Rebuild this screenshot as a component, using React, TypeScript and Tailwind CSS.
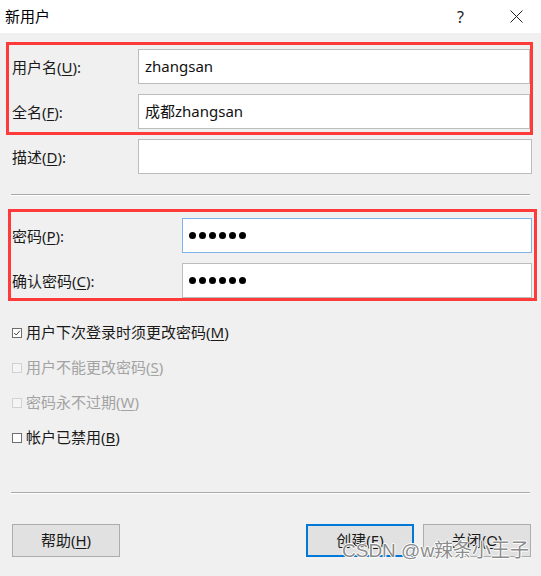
const font = "font-['Noto_Sans','Noto_Sans_CJK_SC',sans-serif]";

function Label({ text, k, tail = "):" }: { text: string; k: string; tail?: string }) {
  return (
    <span className="text-[15px] leading-none text-[#1a1a1a]">
      {text}(<span className="underline underline-offset-2">{k}</span>{tail}
    </span>
  );
}

function Field({ value, w, focus }: { value?: string; w: string; focus?: boolean }) {
  return (
    <div
      className={`${w} h-[35px] bg-white border flex items-center px-[6px] text-[15px] text-[#111] ${
        focus ? "border-[#7eb4ea]" : "border-[#bcbcbc]"
      }`}
    >
      {value}
    </div>
  );
}

function Dots() {
  return (
    <div className="flex gap-[3px]">
      {[0, 1, 2, 3, 4, 5].map((i) => (
        <span key={i} className="w-[7px] h-[7px] rounded-full bg-black" />
      ))}
    </div>
  );
}

function Check({ checked, disabled, text, k }: { checked?: boolean; disabled?: boolean; text: string; k: string }) {
  return (
    <div className="h-[35px] flex items-center pl-[12px] gap-[4px]">
      <svg width="10" height="10" viewBox="0 0 10 10">
        <rect
          x="0.5"
          y="0.5"
          width="9"
          height="9"
          fill={disabled ? "#f4f4f4" : "#fff"}
          stroke={disabled ? "#d2d2d2" : "#6e6e6e"}
        />
        {checked && <path d="M2.2 5 L4.2 7 L7.8 2.8" fill="none" stroke="#444" strokeWidth="1" />}
      </svg>
      <span className={`text-[15px] leading-none ${disabled ? "text-[#a3a3a3]" : "text-[#1a1a1a]"}`}>
        {text}(<span className="underline underline-offset-2">{k}</span>)
      </span>
    </div>
  );
}

function Separator() {
  return <div className="ml-[11px] w-[519px] h-[2px] border-t border-[#a9a9a9] border-b border-b-white" />;
}

function Btn({ text, k, primary }: { text: string; k: string; primary?: boolean }) {
  return (
    <div
      className={`w-[108px] h-[33px] bg-[#e1e1e1] flex items-center justify-center text-[15px] text-[#1a1a1a] ${
        primary ? "border-2 border-[#0078d7]" : "border border-[#adadad]"
      }`}
    >
      {text}(<span className="underline underline-offset-2">{k}</span>)
    </div>
  );
}

export default function App() {
  return (
    <div className={`relative w-[541px] h-[576px] bg-[#f0f0f0] flex flex-col overflow-hidden ${font}`}>
      <div className="h-[33px] bg-white flex items-center pl-[5px] pr-[18px]">
        <span className="text-[15px] text-black">新用户</span>
        <span className="ml-auto text-[16px] text-[#222] mr-[46px]">?</span>
        <svg width="13" height="13" viewBox="0 0 13 13">
          <path d="M0.5 0.5 L12.5 12.5 M12.5 0.5 L0.5 12.5" stroke="#222" strokeWidth="1" />
        </svg>
      </div>

      <div className="mt-[9px] ml-[6px] w-[527px] border-[3px] border-[#ff3a3a] pt-[4px] pb-[3px] flex flex-col gap-[10px]">
        <div className="flex items-center">
          <div className="w-[129px] pl-[3px]">
            <Label text="用户名" k="U" />
          </div>
          <Field value="zhangsan" w="w-[392px]" />
        </div>
        <div className="flex items-center">
          <div className="w-[129px] pl-[3px]">
            <Label text="全名" k="F" />
          </div>
          <Field value="成都zhangsan" w="w-[392px]" />
        </div>
      </div>

      <div className="mt-[4px] flex items-center">
        <div className="w-[138px] pl-[12px]">
          <Label text="描述" k="D" />
        </div>
        <Field w="w-[394px]" />
      </div>

      <div className="mt-[20px]">
        <Separator />
      </div>

      <div className="mt-[13px] ml-[8px] w-[529px] border-[3px] border-[#ff3a3a] pt-[6px] flex flex-col gap-[10px]">
        <div className="flex items-center">
          <div className="w-[171px] pl-[1px]">
            <Label text="密码" k="P" />
          </div>
          <div className="w-[350px] h-[35px] bg-white border border-[#7eb4ea] flex items-center px-[6px]">
            <Dots />
          </div>
        </div>
        <div className="flex items-center">
          <div className="w-[171px] pl-[1px]">
            <Label text="确认密码" k="C" />
          </div>
          <div className="w-[350px] h-[35px] bg-white border border-[#bcbcbc] flex items-center px-[6px]">
            <Dots />
          </div>
        </div>
      </div>

      <div className="mt-[14px] flex flex-col">
        <Check checked text="用户下次登录时须更改密码" k="M" />
        <Check disabled text="用户不能更改密码" k="S" />
        <Check disabled text="密码永不过期" k="W" />
        <Check text="帐户已禁用" k="B" />
      </div>

      <div className="mt-[37px]">
        <Separator />
      </div>

      <div className="mt-[30px] flex pl-[12px]">
        <Btn text="帮助" k="H" />
        <div className="ml-auto flex gap-[9px] mr-[10px]">
          <Btn text="创建" k="E" primary />
          <Btn text="关闭" k="O" />
        </div>
      </div>

      <div className="absolute left-[342px] top-[541px] text-[19px] leading-none text-[#8c8c8c] [text-shadow:1px_0_0_#fff,-1px_0_0_#fff,0_1px_0_#fff,0_-1px_0_#fff] font-['Liberation_Sans','Noto_Sans_CJK_SC',sans-serif]">
        CSDN @w辣条小王子
      </div>
    </div>
  );
}
